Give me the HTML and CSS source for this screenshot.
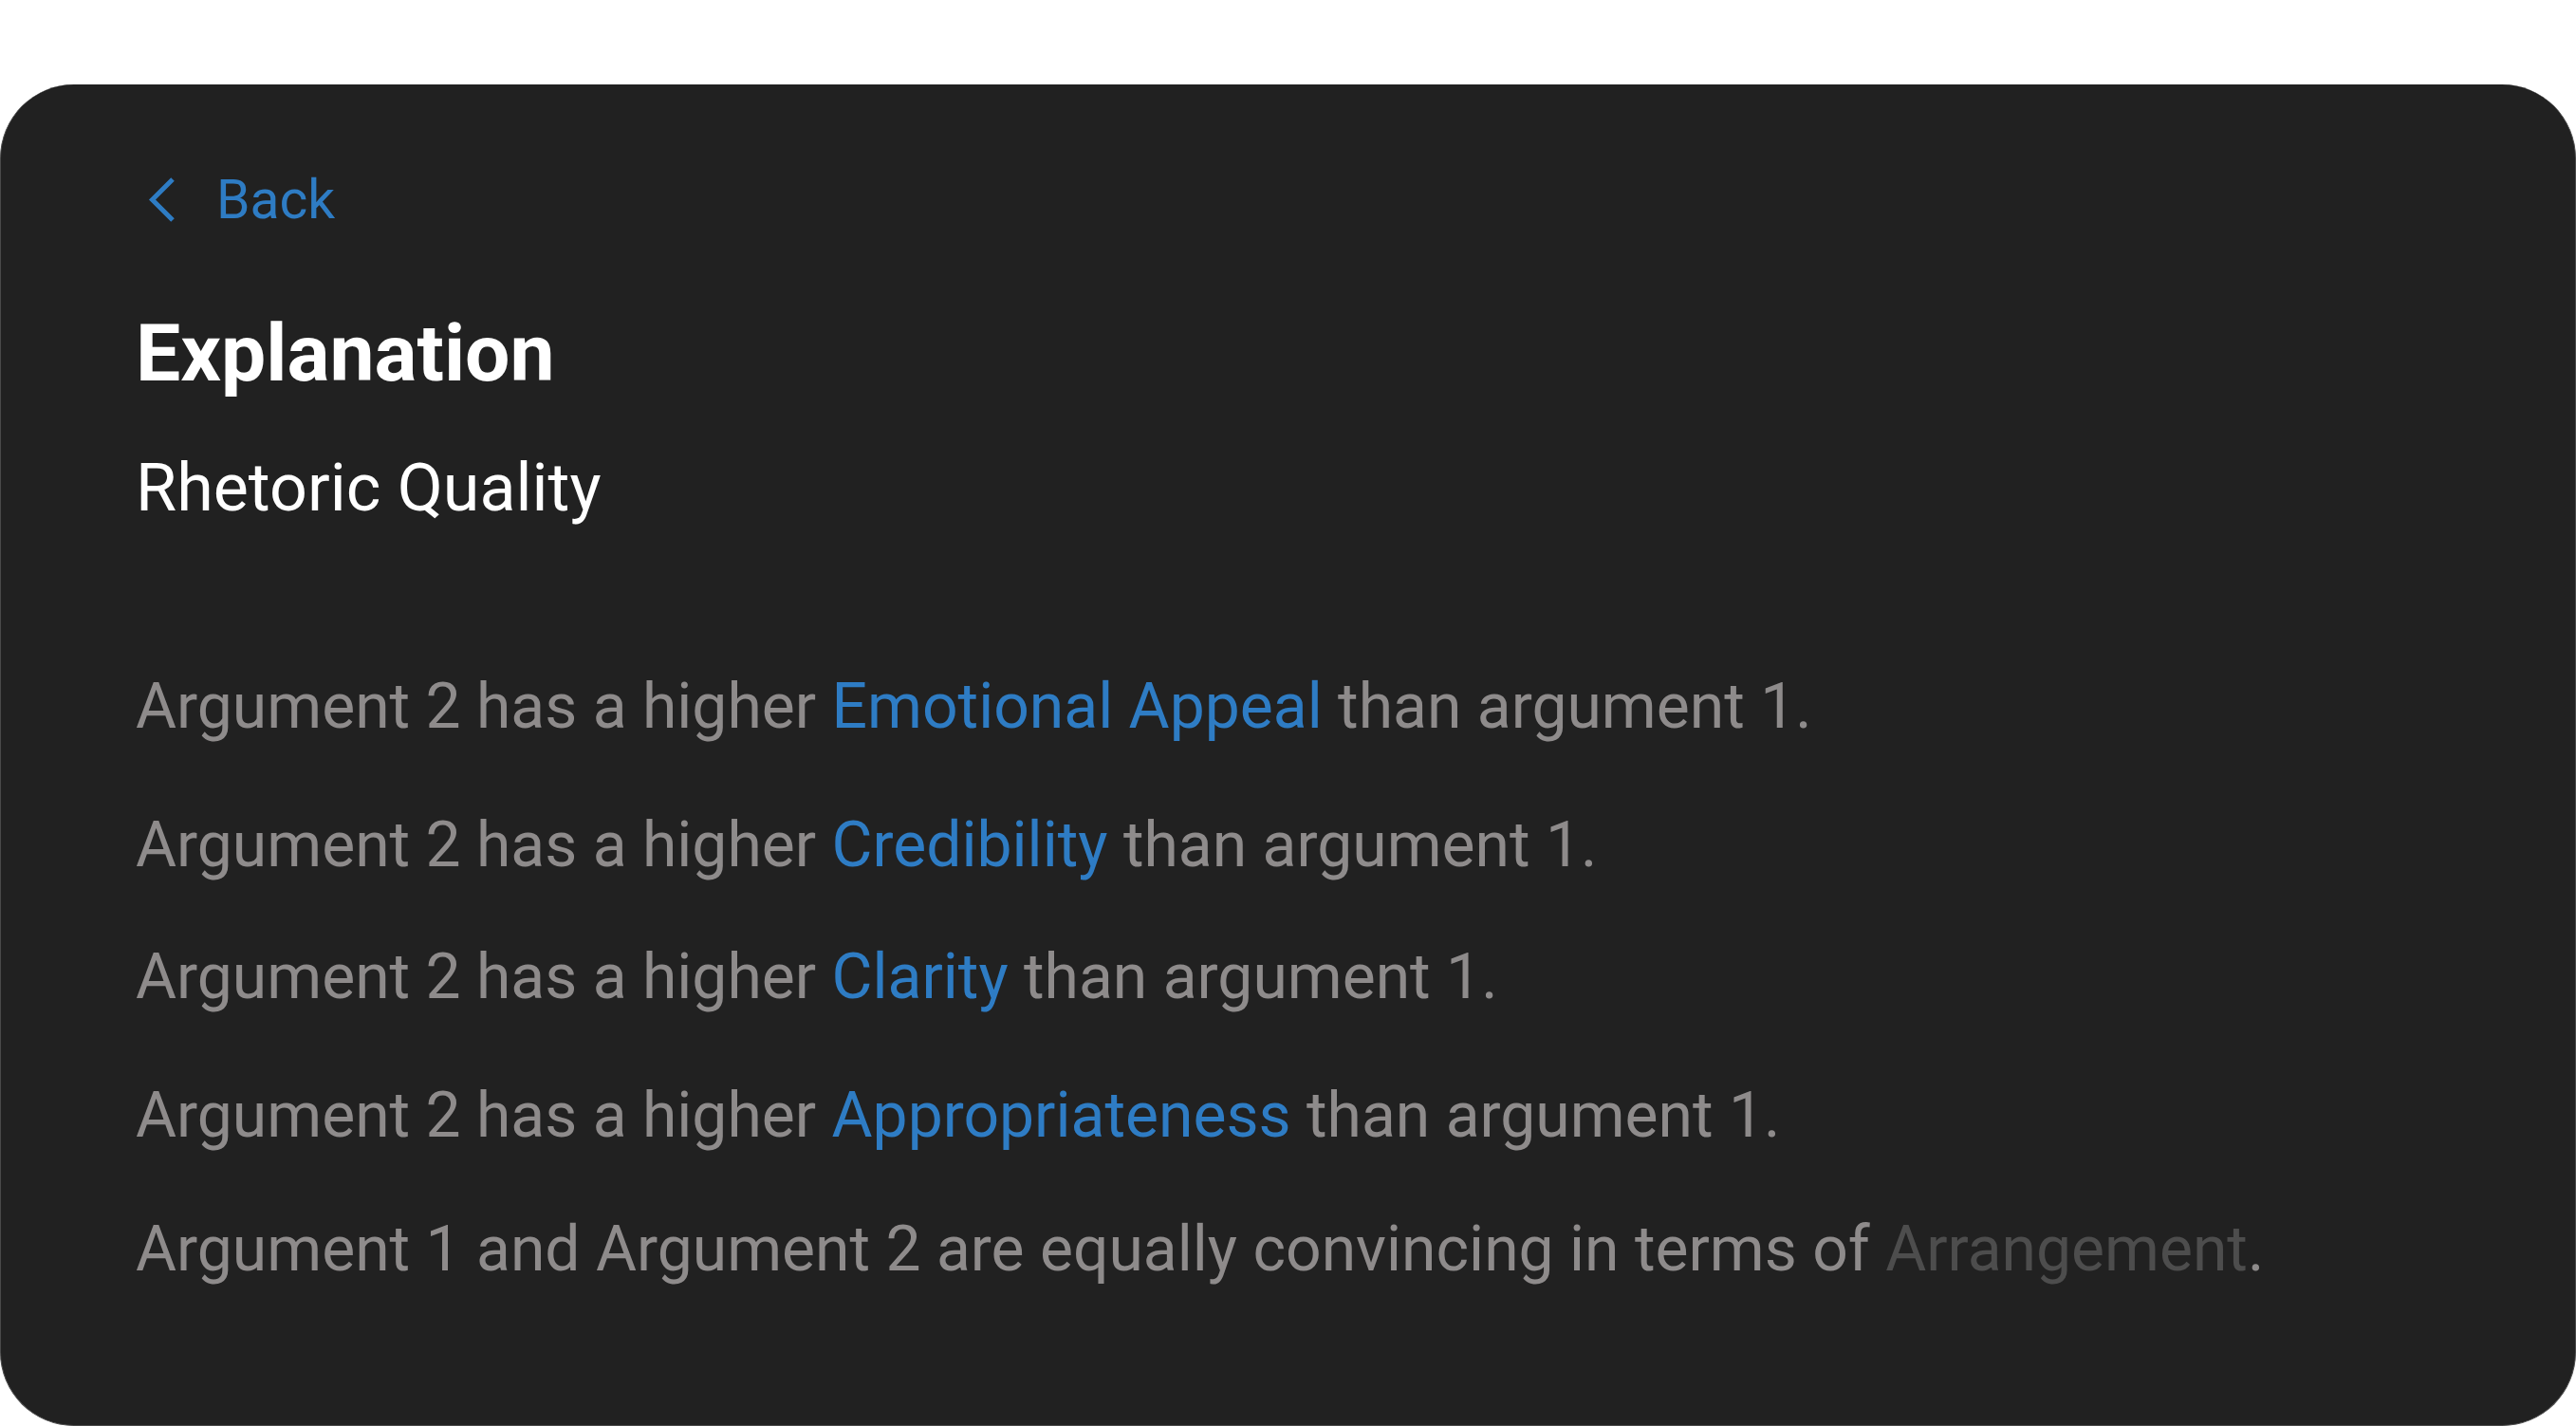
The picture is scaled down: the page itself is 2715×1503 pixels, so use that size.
FILE: index.html
```html
<!DOCTYPE html>
<html lang="en">
<head>
<meta charset="utf-8">
<title>Explanation</title>
<link rel="stylesheet" href="styles.css">
</head>
<body>
<main class="card">
  <a class="back" href="#">
    <svg class="back-icon" width="56" height="56" viewBox="0 0 56 56" aria-hidden="true">
      <polyline points="39,6 17.5,27.5 39,49" fill="none" stroke="currentColor" stroke-width="5" stroke-linecap="butt" stroke-linejoin="miter"/>
    </svg>
    <span class="back-label">Back</span>
  </a>
  <h1 class="title">Explanation</h1>
  <h2 class="subtitle">Rhetoric Quality</h2>
  <div class="lines">
    <p class="line">Argument 2 has a higher <span class="hl">Emotional Appeal</span> than argument 1.</p>
    <p class="line">Argument 2 has a higher <span class="hl">Credibility</span> than argument 1.</p>
    <p class="line">Argument 2 has a higher <span class="hl">Clarity</span> than argument 1.</p>
    <p class="line">Argument 2 has a higher <span class="hl">Appropriateness</span> than argument 1.</p>
    <p class="line">Argument 1 and Argument 2 are equally convincing in terms of <span class="dim">Arrangement</span>.</p>
  </div>
</main>
</body>
</html>
```
FILE: styles.css
```css
html, body {
  margin: 0;
  padding: 0;
  background: #ffffff;
}

body {
  font-family: Roboto, "Noto Sans", "Liberation Sans", sans-serif;
  padding-top: 89px;
}

.card {
  box-sizing: border-box;
  height: 1414px;
  background: #212121;
  border-radius: 78px;
  border-left: 1px solid #4a4a4a;
  border-right: 1px solid #4a4a4a;
  border-bottom: 1px solid #4a4a4a;
  padding: 94px 0 0 142px;
  display: flex;
  flex-direction: column;
  align-items: flex-start;
}

.back {
  display: flex;
  align-items: center;
  gap: 29px;
  color: #2e7cc4;
  text-decoration: none;
  height: 56px;
}

.back-icon {
  display: block;
  flex: none;
}

.back-label {
  font-size: 57px;
  line-height: 56px;
}

.title {
  margin: 92px 0 0 0;
  font-size: 84px;
  line-height: 84px;
  font-weight: 700;
  color: #ffffff;
}

.subtitle {
  margin: 64px 0 0 0;
  font-size: 70px;
  line-height: 70px;
  font-weight: 400;
  color: #ffffff;
}

.lines {
  margin-top: 163px;
  display: flex;
  flex-direction: column;
}

.line {
  margin: 0;
  font-size: 66px;
  line-height: 66px;
  color: #8e8b8b;
  white-space: nowrap;
}

.line:nth-child(even) {
  margin-top: 80px;
}

.line:nth-child(3) {
  margin-top: 73px;
}

.line:nth-child(5) {
  margin-top: 75px;
}

.hl {
  color: #2e7cc4;
}

.dim {
  color: #4d4d4d;
}
```
